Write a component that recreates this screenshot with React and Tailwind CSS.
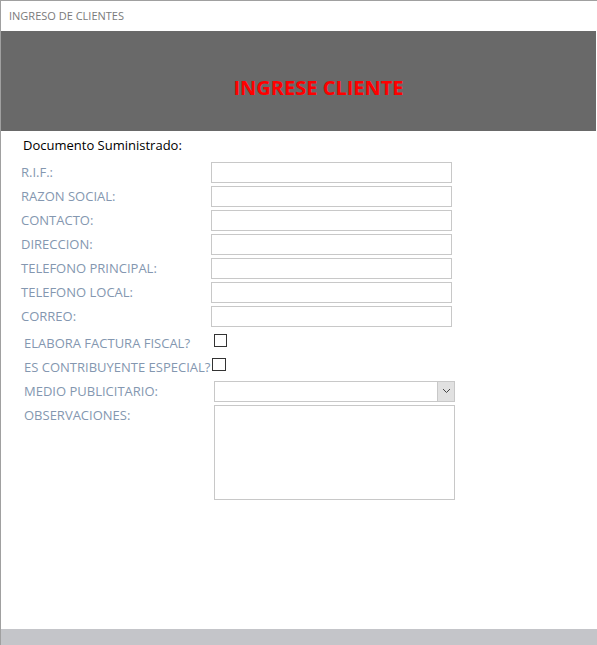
import React from 'react';

const FONT = { fontFamily: '"Open Sans", "Noto Sans", sans-serif' };

const campos = [
    'R.I.F.:',
    'RAZON SOCIAL:',
    'CONTACTO:',
    'DIRECCION:',
    'TELEFONO PRINCIPAL:',
    'TELEFONO LOCAL:',
    'CORREO:',
];

const Campo = ({ label }) => (
    <div className="flex items-center h-[24px]">
        <span className="w-[210px] pl-[20px] text-[13px] text-[#8497b0] leading-none">{label}</span>
        <div className="w-[241px] h-[21px] border border-[#c8c8c8] bg-white" />
    </div>
);

export default function App() {
    return (
        <div className="w-[597px] h-[645px] flex flex-col bg-white border-l border-t border-[#a0a0a0] overflow-hidden" style={FONT}>
            <div className="h-[30px] flex items-center pl-[8px] text-[11px] text-[#7a7a7a]">
                INGRESO DE CLIENTES
            </div>
            <div className="h-[100px] bg-[#696969] flex items-center justify-center mr-[1px]">
                <h1 className="text-[20px] font-bold text-[#ff0000] pl-[40px] pt-[14px]">INGRESE CLIENTE</h1>
            </div>
            <div className="flex-1 flex flex-col">
                <div className="pl-[22px] h-[29px] text-[13px] text-black flex items-center">
                    Documento Suministrado:
                </div>
                <div className="flex flex-col">
                    {campos.map((c) => (
                        <Campo key={c} label={c} />
                    ))}
                </div>
                <div className="flex flex-col mt-[3px]">
                    <div className="flex items-center h-[24px]">
                        <span className="w-[213px] pl-[23px] text-[13px] text-[#8497b0] leading-none whitespace-nowrap">ELABORA FACTURA FISCAL?</span>
                        <div className="w-[13px] h-[13px] border border-[#333] bg-white -mt-[6px]" />
                    </div>
                    <div className="flex items-center h-[24px]">
                        <span className="w-[211px] pl-[23px] text-[13px] text-[#8497b0] leading-none whitespace-nowrap">ES CONTRIBUYENTE ESPECIAL?</span>
                        <div className="w-[14px] h-[13px] border border-[#333] bg-white -mt-[6px]" />
                    </div>
                    <div className="flex items-center h-[24px]">
                        <span className="w-[213px] pl-[23px] text-[13px] text-[#8497b0] leading-none">MEDIO PUBLICITARIO:</span>
                        <div className="w-[241px] h-[21px] border border-[#c8c8c8] bg-white flex justify-end">
                            <div className="w-[17px] h-full bg-[#e1e1e1] border-l border-[#c8c8c8] flex items-center justify-center">
                                <svg width="9" height="6" viewBox="0 0 9 6" fill="none">
                                    <path d="M1 1l3.5 3.5L8 1" stroke="#444" strokeWidth="1" />
                                </svg>
                            </div>
                        </div>
                    </div>
                    <div className="flex items-start mt-[2px]">
                        <span className="w-[213px] pl-[23px] pt-[4px] text-[13px] text-[#8497b0] leading-none">OBSERVACIONES:</span>
                        <div className="w-[241px] h-[95px] border border-[#c8c8c8] bg-white" />
                    </div>
                </div>
            </div>
            <div className="h-[16px] bg-[#c4c5c9]" />
        </div>
    );
}
